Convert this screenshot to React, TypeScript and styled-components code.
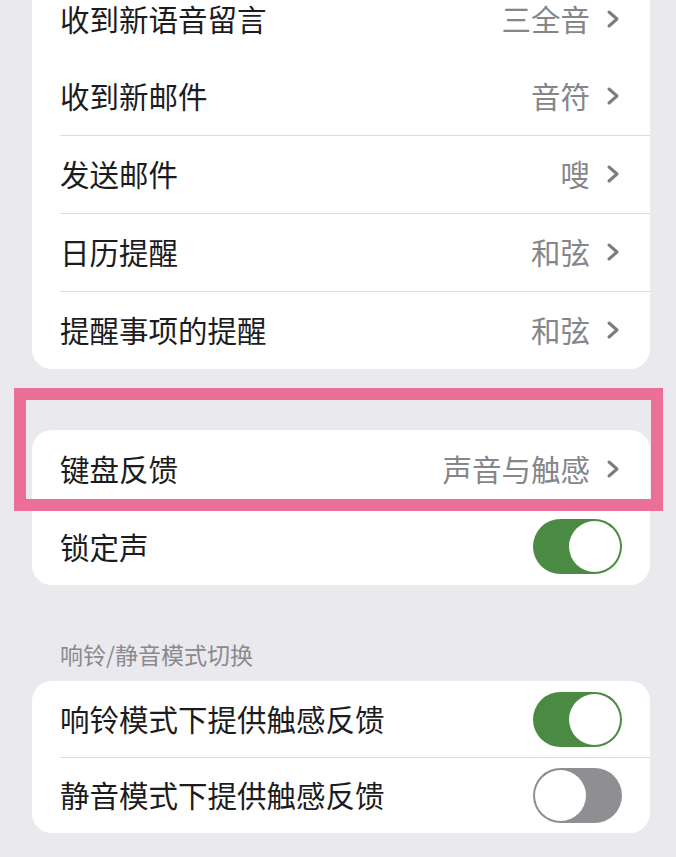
import styled, { createGlobalStyle } from "styled-components";

const GlobalStyle = createGlobalStyle`
    html, body {
        margin: 0;
        padding: 0;
        background: #e9e9ee;
    }
    body {
        font-family: "Noto Sans CJK SC", "Noto Sans", sans-serif;
        -webkit-font-smoothing: antialiased;
    }
`;

const Page = styled.div`
    position: relative;
    width: 676px;
    height: 857px;
    overflow: hidden;
    box-sizing: border-box;
    padding: 0 26px 0 32px;
    display: flex;
    flex-direction: column;
`;

const Card = styled.div<{ $first?: boolean; $gap?: number }>`
    background: #ffffff;
    border-radius: 20px;
    margin-top: ${(p) => (p.$first ? "-20px" : `${p.$gap ?? 0}px`)};
    display: flex;
    flex-direction: column;
`;

const Row = styled.div<{ $h?: number }>`
    height: ${(p) => p.$h ?? 78}px;
    display: flex;
    align-items: center;
    padding: 0 28px;
    position: relative;
    box-sizing: border-box;

    & + &::before {
        content: "";
        position: absolute;
        top: 0;
        left: 28px;
        right: 0;
        height: 1px;
        background: #dcdce0;
    }
`;

const Label = styled.span`
    flex: 1;
    font-size: 29.5px;
    color: #1c1c1e;
    line-height: 1;
`;

const Value = styled.span`
    font-size: 29.5px;
    color: #868689;
    line-height: 1;
    margin-right: 16px;
`;

const Chevron = styled.svg`
    width: 14px;
    height: 20px;
    margin-right: 2px;
    flex-shrink: 0;
`;

const Header = styled.div`
    font-size: 23px;
    color: #8a8a8e;
    padding-left: 28px;
    margin-top: 54px;
    margin-bottom: 12px;
    line-height: 30px;
`;

const Track = styled.div<{ $on: boolean }>`
    width: 89px;
    height: 55px;
    border-radius: 28px;
    background: ${(p) => (p.$on ? "#4a8a42" : "#8e8e93")};
    position: relative;
    flex-shrink: 0;
`;

const Knob = styled.div<{ $on: boolean }>`
    position: absolute;
    top: 2px;
    left: ${(p) => (p.$on ? "36px" : "2px")};
    width: 51px;
    height: 51px;
    border-radius: 50%;
    background: #ffffff;
`;

const Highlight = styled.div`
    position: absolute;
    left: 14px;
    top: 388px;
    width: 649px;
    height: 123px;
    box-sizing: border-box;
    border: 12px solid #ec6f97;
    pointer-events: none;
`;

const Arrow = () => (
    <Chevron viewBox="0 0 14 20">
        <polyline
            points="3,3 11,10 3,17"
            fill="none"
            stroke="#7c7c80"
            strokeWidth="3"
            strokeLinecap="round"
            strokeLinejoin="round"
        />
    </Chevron>
);

const Toggle = ({ on }: { on: boolean }) => (
    <Track $on={on}>
        <Knob $on={on} />
    </Track>
);

const sounds = [
    { label: "收到新语音留言", value: "三全音" },
    { label: "收到新邮件", value: "音符" },
    { label: "发送邮件", value: "嗖" },
    { label: "日历提醒", value: "和弦" },
    { label: "提醒事项的提醒", value: "和弦" },
];

export default function App() {
    return (
        <>
            <GlobalStyle />
            <Page>
                <Card $first>
                    {sounds.map((s, i) => (
                        <Row key={s.label} $h={i === 0 ? 77 : 78}>
                            <Label>{s.label}</Label>
                            <Value>{s.value}</Value>
                            <Arrow />
                        </Row>
                    ))}
                </Card>

                <Card $gap={61}>
                    <Row>
                        <Label>键盘反馈</Label>
                        <Value>声音与触感</Value>
                        <Arrow />
                    </Row>
                    <Row $h={77}>
                        <Label>锁定声</Label>
                        <Toggle on />
                    </Row>
                </Card>

                <Header>响铃/静音模式切换</Header>
                <Card>
                    <Row $h={76}>
                        <Label>响铃模式下提供触感反馈</Label>
                        <Toggle on />
                    </Row>
                    <Row $h={76}>
                        <Label>静音模式下提供触感反馈</Label>
                        <Toggle on={false} />
                    </Row>
                </Card>

                <Highlight />
            </Page>
        </>
    );
}
